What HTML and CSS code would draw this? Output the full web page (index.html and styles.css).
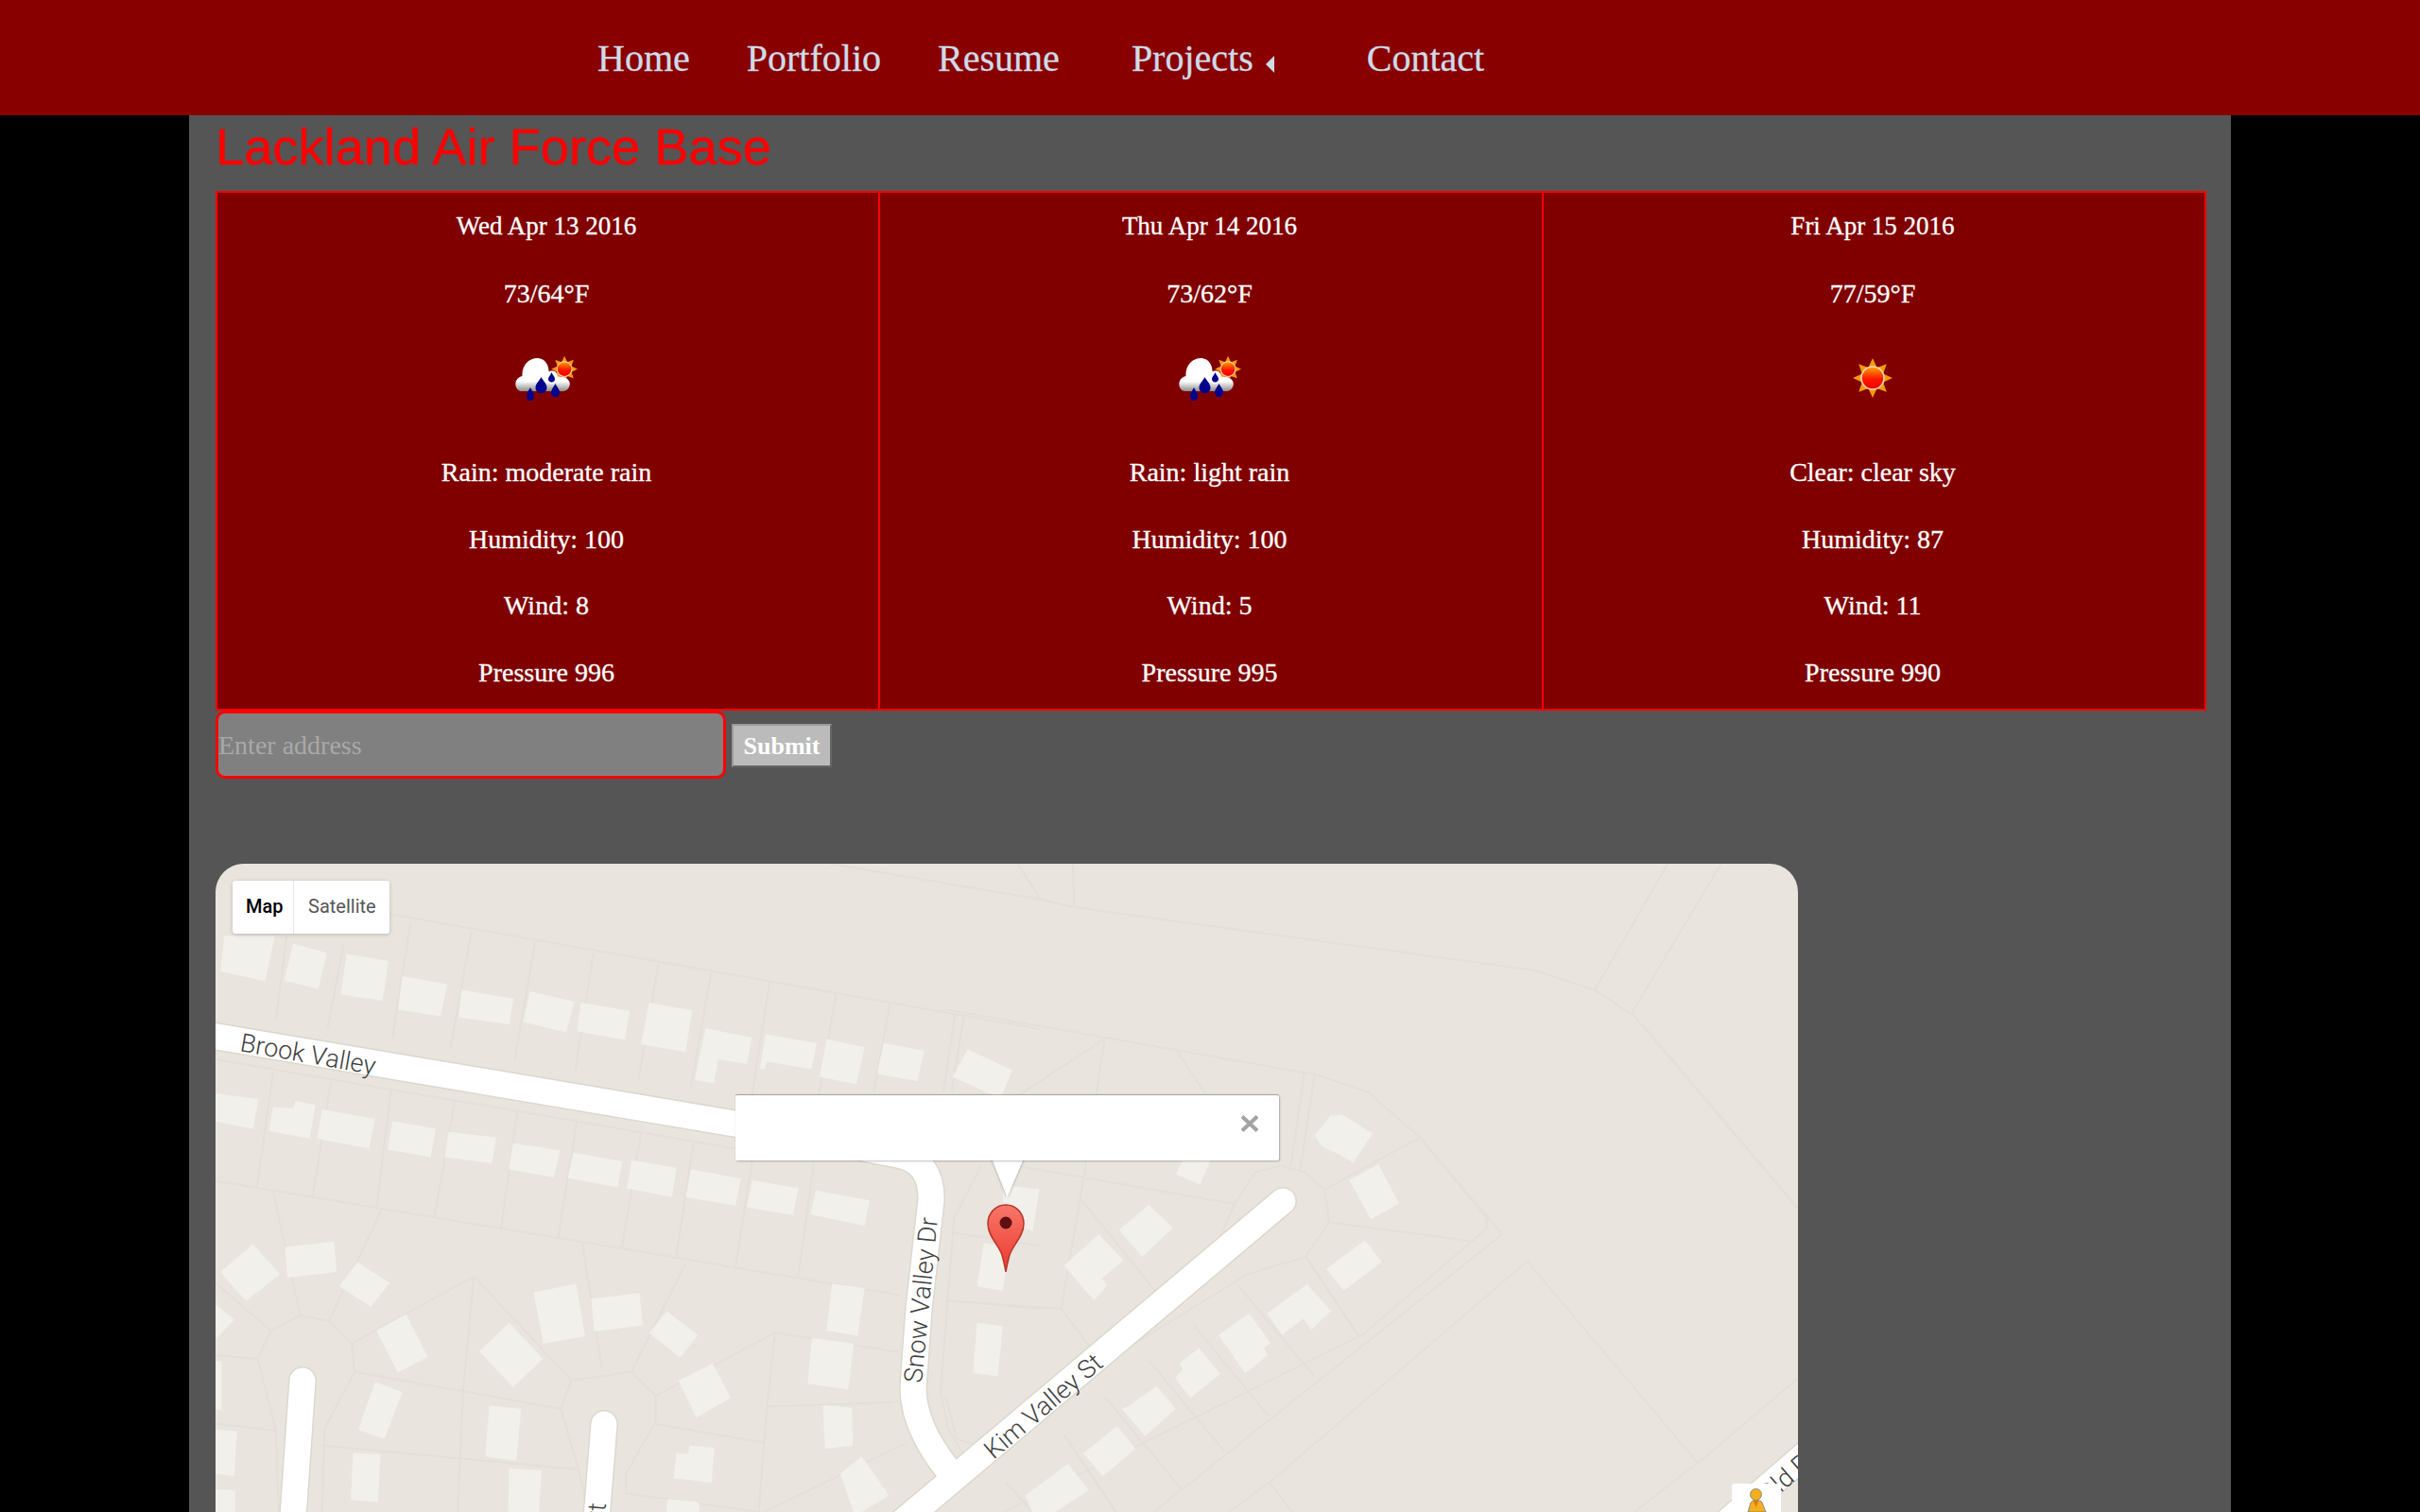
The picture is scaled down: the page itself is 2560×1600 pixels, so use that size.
FILE: index.html
```html
<!DOCTYPE html>
<html lang="en">
<head>
    <meta charset="UTF-8">
    <title>Lackland Air Force Base</title>
    <link rel="stylesheet" href="styles.css">
</head>
<body>
    <svg class="defs" width="0" height="0">
        <defs>
            <linearGradient id="sunFill" x1="0" y1="0" x2="0" y2="1">
                <stop offset="0" stop-color="#ffa600"/>
                <stop offset=".55" stop-color="#ff1500"/>
                <stop offset="1" stop-color="#f00000"/>
            </linearGradient>
            <linearGradient id="cloudFill" x1="0" y1="0" x2="0" y2="1">
                <stop offset="0" stop-color="#ffffff"/>
                <stop offset=".7" stop-color="#ffffff"/>
                <stop offset="1" stop-color="#8c8c8c"/>
            </linearGradient>
            <linearGradient id="pinFill" x1="0" y1="0" x2="0" y2="1">
                <stop offset="0" stop-color="#f8776a"/>
                <stop offset="1" stop-color="#ea3a2d"/>
            </linearGradient>
            <g id="sunShape">
                <polygon fill="#f79a0b" points="56,35 46.1,39.6 49.8,49.8 39.6,46.1 35,56 30.4,46.1 20.2,49.8 23.9,39.6 14,35 23.9,30.4 20.2,20.2 30.4,23.9 35,14 39.6,23.9 49.8,20.2 46.1,30.4"/>
                <circle cx="35" cy="35" r="12" fill="url(#sunFill)" stroke="#ffd9b0" stroke-width="1.6"/>
            </g>
            <symbol id="rainIcon" viewBox="23.5 12 70 70">
                <g class="soft">
                    <use href="#sunShape" transform="translate(54.5 14.5) scale(.66)"/>
                    <g fill="url(#cloudFill)">
                        <path d="M33 61 C24 61 23 47 33 45 C32 32 42 25 50 26 C58 27 61 34 61 40 C68 37 71 43 70 46 C78 44 85 50 83 55 C82 59 79 61 75 61 Z"/>
                    </g>
                    <circle cx="64" cy="47" r="6" fill="#fff"/>
                    <g fill="#03038f">
                        <path d="M53 46 C55 50 59 53 59 57 C59 61 56 63 53 63 C50 63 47 61 47 57 C47 53 51 50 53 46 Z"/>
                        <path d="M41.500 57 C43 60 45.500 63 45.500 66 C45.500 69 43.500 71 41.500 71 C39.500 71 37.500 69 37.500 66 C37.500 63 40 60 41.500 57 Z"/>
                        <path d="M68 53 C69.500 56 72.500 59 72.500 62 C72.500 65 70.500 67 68 67 C65.500 67 63.500 65 63.500 62 C63.500 59 66.500 56 68 53 Z"/>
                        <path d="M64 41 C65 44 67.500 45.500 67.500 48 C67.500 50 66 51.500 64 51.500 C62 51.500 60.500 50 60.500 48 C60.500 45.500 63 44 64 41 Z"/>
                    </g>
                </g>
            </symbol>
            <symbol id="clearIcon" viewBox="0 0 70 70">
                <use class="soft" href="#sunShape"/>
            </symbol>
        </defs>
    </svg>

    <header class="topbar">
        <nav class="menu">
            <a href="#">Home</a>
            <a href="#">Portfolio</a>
            <a href="#">Resume</a>
            <a href="#" class="projects">Projects <span class="caret"></span></a>
            <a href="#">Contact</a>
        </nav>
    </header>

    <main class="page">
        <h1 class="city">Lackland Air Force Base</h1>

        <section class="forecast">
            <div class="day">
                <p class="date">Wed Apr 13 2016</p>
                <p>73/64°F</p>
                <svg class="icon"><use href="#rainIcon"/></svg>
                <p>Rain: moderate rain</p>
                <p>Humidity: 100</p>
                <p>Wind: 8</p>
                <p>Pressure 996</p>
            </div>
            <div class="day">
                <p class="date">Thu Apr 14 2016</p>
                <p>73/62°F</p>
                <svg class="icon"><use href="#rainIcon"/></svg>
                <p>Rain: light rain</p>
                <p>Humidity: 100</p>
                <p>Wind: 5</p>
                <p>Pressure 995</p>
            </div>
            <div class="day">
                <p class="date">Fri Apr 15 2016</p>
                <p>77/59°F</p>
                <svg class="icon"><use href="#clearIcon"/></svg>
                <p>Clear: clear sky</p>
                <p>Humidity: 87</p>
                <p>Wind: 11</p>
                <p>Pressure 990</p>
            </div>
        </section>

        <form class="search">
            <input class="address" type="text" placeholder="Enter address">
            <button class="submit" type="button">Submit</button>
        </form>

        <div class="map">
            <svg class="tiles" width="1674" height="686" viewBox="228 914 1674 686">
                <rect x="228" y="914" width="1674" height="686" fill="#e9e5de"/>

                <!-- lot lines, coordinates taken from the crops -->
                <g transform="translate(200 880) scale(.574 .4592)" class="lot">
                    <polyline points="370,190 1568,455"/>
                    <polyline points="1180,74 1568,155"/>
                    <polyline points="180,240 160,435"/>
                    <polyline points="285,260 255,455"/>
                    <polyline points="408,210 375,475"/>
                    <polyline points="520,230 482,500"/>
                    <polyline points="638,255 600,525"/>
                    <polyline points="745,280 712,550"/>
                    <polyline points="865,305 828,575"/>
                    <polyline points="962,325 925,590"/>
                    <polyline points="1070,347 1037,610"/>
                    <polyline points="1192,375 1160,610"/>
                    <polyline points="1292,395 1262,600"/>
                    <polyline points="1412,420 1390,600"/>
                    <polyline points="1428,425 1405,600"/>
                    <polyline points="49,525 1005,730"/>
                    <polyline points="155,555 125,820"/>
                    <polyline points="262,570 228,840"/>
                    <polyline points="372,595 345,870"/>
                    <polyline points="490,620 452,890"/>
                    <polyline points="605,645 575,915"/>
                    <polyline points="715,665 680,938"/>
                    <polyline points="833,695 797,962"/>
                    <polyline points="930,715 897,985"/>
                    <polyline points="1040,740 1007,1005"/>
                    <polyline points="1152,760 1122,1030"/>
                    <polyline points="49,805 1310,1068"/>
                    <polyline points="155,830 205,1115 150,1150 49,1040"/>
                    <polyline points="205,1115 258,1128 355,870"/>
                    <polyline points="258,1128 300,1180 305,1245 250,1375 245,1568"/>
                    <polyline points="150,1150 127,1215 160,1380 165,1568"/>
                    <polyline points="127,1215 49,1207"/>
                    <polyline points="49,1365 160,1380"/>
                    <polyline points="300,1180 525,1025 505,1290 495,1568"/>
                    <polyline points="525,1025 705,1265 815,1245 915,995"/>
                    <polyline points="725,950 760,1232"/>
                    <polyline points="815,1245 860,1300 860,1360 805,1480 805,1525"/>
                    <polyline points="860,1300 1080,1155 1310,1200"/>
                    <polyline points="1080,1155 1065,1325 1050,1568"/>
                    <polyline points="1065,1325 1300,1315"/>
                    <polyline points="305,1245 685,1330 705,1265"/>
                    <polyline points="685,1330 718,1470 735,1568"/>
                    <polyline points="245,1415 718,1470"/>
                    <polyline points="805,1525 1050,1568"/>
                    <polyline points="860,1365 1060,1408"/>
                    <polyline points="1320,1410 1060,1568"/>
                    <polyline points="1385,1290 1400,1380 1430,1440"/>
                    <polyline points="1410,890 1460,770"/>
                    <polyline points="1410,925 1568,955"/>
                    <polyline points="1395,1080 1568,1100"/>
                    <polyline points="1410,890 1385,1290"/>
                </g>
                <g transform="translate(1000 880) scale(.6124 .4592)" class="lot">
                    <polyline points="0,120 165,157 225,175 1020,320 1122,365 1190,425 1473,870"/>
                    <polyline points="1205,445 1473,868"/>
                    <polyline points="125,74 165,157"/>
                    <polyline points="220,74 223,175"/>
                    <polyline points="1248,74 1122,365"/>
                    <polyline points="1340,74 1185,420"/>
                    <polyline points="0,410 640,560 730,600 820,705 935,890 935,915 720,1160"/>
                    <polyline points="820,705 962,928 360,1568"/>
                    <polyline points="620,558 597,770"/>
                    <polyline points="638,560 613,780"/>
                    <polyline points="275,478 240,790 200,1100 0,1080"/>
                    <polyline points="275,478 130,605"/>
                    <polyline points="400,505 450,605"/>
                    <polyline points="80,760 500,858 535,785 580,770 620,785 655,825 663,900 622,980 522,1020 45,1410 20,1400 0,1300"/>
                    <polyline points="500,858 475,930"/>
                    <polyline points="820,705 655,825"/>
                    <polyline points="663,900 915,945"/>
                    <polyline points="623,980 715,1165"/>
                    <polyline points="505,1045 637,1255"/>
                    <polyline points="428,1135 557,1345"/>
                    <polyline points="352,1220 483,1430"/>
                    <polyline points="277,1305 408,1515"/>
                    <polyline points="205,1390 295,1568"/>
                    <polyline points="105,1500 150,1568"/>
                    <polyline points="233,845 362,1058"/>
                    <polyline points="200,1100 248,1185"/>
                    <polyline points="720,1160 100,1568"/>
                    <polyline points="1005,990 1300,1455 1473,1260"/>
                    <polyline points="1005,990 560,1500 490,1568"/>
                    <polyline points="560,1500 600,1568"/>
                    <polyline points="1300,1455 1190,1568"/>
                </g>

                <!-- buildings -->
                <g transform="translate(200 880) scale(.574 .4592)" class="house">
                    <polygon points="65,240 158,240 140,345 58,322"/>
                    <polygon points="192,258 254,280 238,363 175,343"/>
                    <polygon points="290,282 367,298 357,390 280,375"/>
                    <polygon points="393,333 476,352 463,426 385,410"/>
                    <polygon points="502,365 598,385 590,444 497,428"/>
                    <polygon points="628,368 710,392 695,463 616,438"/>
                    <polygon points="722,394 812,413 803,480 715,460"/>
                    <polygon points="848,394 927,412 915,508 833,490"/>
                    <polygon points="952,453 1037,475 1028,535 975,525 967,580 932,572"/>
                    <polygon points="1063,467 1157,488 1147,547 1065,530 1060,548 1052,546"/>
                    <polygon points="1175,478 1245,497 1230,582 1162,565"/>
                    <polygon points="1280,487 1355,505 1342,575 1268,558"/>
                    <polygon points="1435,502 1517,550 1495,615 1407,565"/>
                    <polygon points="49,603 128,617 118,685 49,668"/>
                    <polygon points="155,635 192,638 196,620 233,630 222,707 147,690"/>
                    <polygon points="245,640 342,662 332,730 236,708"/>
                    <polygon points="375,667 455,685 445,750 366,733"/>
                    <polygon points="478,692 566,705 558,764 471,750"/>
                    <polygon points="597,718 684,735 672,797 589,778"/>
                    <polygon points="708,740 798,760 790,820 698,798"/>
                    <polygon points="816,757 898,775 890,842 807,822"/>
                    <polygon points="925,778 1017,800 1007,862 915,842"/>
                    <polygon points="1038,803 1123,822 1113,884 1028,865"/>
                    <polygon points="1155,827 1254,850 1245,908 1145,882"/>
                    <polygon points="118,950 167,1020 105,1082 58,1015"/>
                    <polygon points="177,957 267,945 272,1015 181,1028"/>
                    <polygon points="310,992 370,1040 335,1095 277,1048"/>
                    <polygon points="400,1112 440,1210 385,1246 345,1150"/>
                    <polygon points="49,1090 83,1125 49,1170"/>
                    <polygon points="635,1062 713,1042 730,1163 653,1180"/>
                    <polygon points="741,1077 830,1063 836,1138 747,1152"/>
                    <polygon points="880,1105 938,1160 905,1212 848,1155"/>
                    <polygon points="590,1132 652,1215 597,1280 535,1198"/>
                    <polygon points="965,1226 998,1305 935,1350 902,1265"/>
                    <polygon points="1148,1167 1225,1180 1215,1286 1140,1272"/>
                    <polygon points="1185,1042 1245,1052 1232,1162 1175,1150"/>
                    <polygon points="1168,1322 1222,1328 1223,1415 1172,1422"/>
                    <polygon points="343,1268 393,1292 360,1400 312,1378"/>
                    <polygon points="553,1323 612,1330 603,1450 546,1440"/>
                    <polygon points="49,1220 60,1220 60,1332 49,1332"/>
                    <polygon points="49,1378 88,1382 83,1486 49,1480"/>
                    <polygon points="302,1432 353,1435 348,1545 298,1540"/>
                    <polygon points="922,1415 968,1420 963,1500 893,1490 898,1433 920,1435"/>
                    <polygon points="1240,1440 1290,1530 1240,1568 1225,1568 1200,1480"/>
                    <polygon points="590,1468 650,1472 645,1568 588,1568"/>
                    <polygon points="882,1538 940,1545 940,1568 880,1568"/>
                    <polygon points="49,1515 85,1518 85,1568 49,1568"/>
                    <polygon points="1465,948 1510,958 1500,1058 1452,1048"/>
                    <polygon points="1452,1132 1500,1140 1490,1255 1445,1248"/>
                    <polygon points="1500,815 1567,825 1555,920 1500,900"/>
                </g>
                <g transform="translate(1000 880) scale(.6124 .4592)" class="house">
                    <polygon points="665,655 685,652 738,695 705,763 682,745 650,725 638,700"/>
                    <polygon points="748,767 784,857 735,893 698,803"/>
                    <polygon points="352,860 393,913 340,980 300,918"/>
                    <polygon points="265,928 308,988 270,1030 280,1045 257,1080 205,1000"/>
                    <polygon points="725,942 754,992 688,1058 658,1008"/>
                    <polygon points="625,1043 666,1105 632,1148 618,1122 582,1160 556,1110"/>
                    <polygon points="525,1110 562,1178 550,1190 557,1207 518,1248 472,1160"/>
                    <polygon points="438,1190 475,1250 423,1305 397,1258 410,1240 405,1225"/>
                    <polygon points="365,1278 398,1330 345,1393 305,1330 315,1325"/>
                    <polygon points="297,1370 328,1422 272,1485 238,1433"/>
                    <polygon points="212,1457 248,1518 190,1568 150,1568 138,1530"/>
                    <polygon points="410,758 458,758 440,813 398,790"/>
                </g>

                <!-- roads -->
                <path class="road-edge" d="M200 1092 L777 1189 L950 1222 Q986 1229 985 1270 L972 1385 L966 1468 Q966 1510 1004 1557"/>
                <path class="road-edge" d="M1357 1271 L955 1610"/>
                <path class="road-edge" d="M320 1461 L309 1620"/>
                <path class="road-edge" d="M639 1507 L630 1620"/>
                <path class="road-edge" d="M1925 1526 L1810 1625"/>
                <path class="road" d="M200 1092 L777 1189 L950 1222 Q986 1229 985 1270 L972 1385 L966 1468 Q966 1510 1004 1557"/>
                <path class="road" d="M1357 1271 L955 1610"/>
                <path class="road" d="M320 1461 L309 1620"/>
                <path class="road" d="M639 1507 L630 1620"/>
                <path class="road" d="M1925 1526 L1810 1625"/>

                <text class="label" transform="translate(253 1112) rotate(10)">Brook Valley</text>
                <text class="label" transform="translate(975 1464) rotate(-84.500)">Snow Valley Dr</text>
                <text class="label" transform="translate(1051 1545) rotate(-40.500)">Kim Valley St</text>
                <text class="label" transform="translate(641 1591) rotate(-85)" text-anchor="end">St</text>
                <text class="label" transform="translate(1870 1592) rotate(-41)">Old Rd</text>

                <!-- marker -->
                <path d="M1064 1275 C1075 1275 1083 1284 1083 1295 C1083 1308 1071 1318 1068 1328 C1066 1335 1065 1340 1064 1346 C1063 1340 1062 1335 1060 1328 C1057 1318 1045 1308 1045 1295 C1045 1284 1053 1275 1064 1275 Z" fill="url(#pinFill)" stroke="#b8362b" stroke-width="1.500"/>
                <circle cx="1064" cy="1294" r="6.500" fill="#5e1010"/>

                <!-- info window tail -->
                <polygon points="1049,1226 1083,1226 1065.500,1267" fill="#fff" class="tail"/>
            </svg>

            <div class="map-type">
                <span class="type-btn type-active">Map</span>
                <span class="type-btn">Satellite</span>
            </div>

            <div class="info-window">
                <svg class="info-close" width="20" height="18" viewBox="0 0 20 18">
                    <path d="M2 1.500 L18 16.500 M18 1.500 L2 16.500" stroke="#a3a3a3" stroke-width="4"/>
                </svg>
            </div>

            <div class="pegman">
                <svg width="52" height="30" viewBox="0 0 52 30">
                    <path d="M17 30 L20 20 Q21 17.500 25.500 17.500 Q31 17.500 32 20 L36 30 Z" fill="#f5ae1c" stroke="#8b8b8b" stroke-width="1"/>
                    <circle cx="25.500" cy="11.500" r="6" fill="#f5ae1c" stroke="#8b8b8b" stroke-width="1"/>
                    <path d="M22.500 18 L28.500 18 L25.500 25 Z" fill="#dd7b12"/>
                </svg>
            </div>
        </div>
    </main>
</body>
</html>
```

FILE: styles.css
```css
html, body{
    margin: 0;
    padding: 0;
    height: 100%;
    overflow: hidden;
}
body{
    background-color: black;
    font-family: "Liberation Serif", Georgia, serif;
}
.defs{
    position: absolute;
}
.soft{
    filter: blur(.4px);
}

.topbar{
    height: 122px;
    background-color: #880000;
    display: flex;
    align-items: center;
}
.menu{
    display: flex;
    align-items: center;
    margin-left: 632px;
}
.menu a{
    color: #cfdbe8;
    font-size: 40px;
    text-decoration: none;
    margin-right: 60px;
    -webkit-text-stroke: .3px #cfdbe8;
}
.menu .projects{
    margin-left: 16px;
    margin-right: 98px;
}
.caret{
    display: inline-block;
    width: 0;
    height: 0;
    margin-left: 3px;
    border-top: 9px solid transparent;
    border-bottom: 9px solid transparent;
    border-right: 9px solid #cfdbe8;
    vertical-align: -2px;
}

.page{
    width: 2160px;
    height: 1478px;
    margin: 0 0 0 200px;
    padding: 0 26px 0 28px;
    box-sizing: border-box;
    background-color: #555555;
    overflow: hidden;
}
.city{
    margin: 0;
    height: 80px;
    line-height: 66px;
    font-family: "Liberation Sans", Arial, sans-serif;
    font-size: 54.25px;
    font-weight: normal;
    color: red;
    -webkit-text-stroke: .4px red;
}

.forecast{
    display: grid;
    grid-template-columns: 699px 702px 1fr;
    height: 550px;
    box-sizing: border-box;
    border: 2px solid red;
    background-color: #800000;
    color: white;
    text-align: center;
}
.day{
    height: 546px;
    box-sizing: border-box;
    padding: 20px 3px 0 0;
    border-left: 2px solid red;
    overflow: hidden;
}
.day:first-child{
    border-left: 0;
}
.day p{
    margin: 0 0 39.5px;
    font-size: 28px;
    line-height: 31px;
    -webkit-text-stroke: .3px white;
}
.day .date{
    font-size: 27px;
}
.icon{
    display: block;
    width: 70px;
    height: 70px;
    margin: 15px auto 49px;
}

.search{
    display: flex;
    align-items: center;
    height: 72px;
}
.address{
    width: 540px;
    height: 72px;
    box-sizing: border-box;
    padding: 2px 0 0;
    border: 3px solid red;
    border-radius: 10px;
    background-color: #808080;
    color: white;
    font-family: inherit;
    font-size: 28px;
    outline: none;
}
.address::placeholder{
    color: #a9a9a9;
    opacity: 1;
}
.submit{
    width: 106px;
    height: 46px;
    margin: 1px 0 0 6px;
    padding: 2px 0 0;
    border: 2px solid;
    border-color: #9a9a9a #666 #666 #9a9a9a;
    background-color: #bbbbbb;
    color: white;
    font-family: inherit;
    font-size: 26px;
    font-weight: bold;
}

.map{
    position: relative;
    width: 1674px;
    height: 686px;
    margin-top: 90px;
    border-radius: 30px 30px 0 0;
    overflow: hidden;
}
.tiles{
    display: block;
}
.lot polyline{
    fill: none;
    stroke: #e3e0d9;
    stroke-width: 2px;
    vector-effect: non-scaling-stroke;
}
.house polygon{
    fill: #f2f0ea;
}
.road, .road-edge{
    fill: none;
    stroke-linecap: round;
    stroke-linejoin: round;
}
.road{
    stroke: white;
    stroke-width: 27px;
}
.road-edge{
    stroke: #dcd8ce;
    stroke-width: 30px;
}
.label{
    font-family: Roboto, sans-serif;
    font-size: 27px;
    font-weight: 300;
    fill: #3f3f3f;
}
.tail{
    filter: drop-shadow(0 0 1.5px rgba(0, 0, 0, .35));
}

.map-type{
    position: absolute;
    top: 18px;
    left: 18px;
    display: flex;
    height: 56px;
    border-radius: 3px;
    background-color: white;
    box-shadow: 0 1px 4px rgba(0, 0, 0, .2);
    font-family: Roboto, sans-serif;
    font-size: 20px;
    line-height: 55px;
}
.type-btn{
    padding: 0 14px 0 15px;
    color: #565656;
}
.type-active{
    width: 37px;
    padding: 0 13px 0 14px;
    border-right: 1px solid #e6e6e6;
    color: black;
    font-weight: 500;
}

.info-window{
    position: absolute;
    top: 245px;
    left: 550px;
    width: 575px;
    height: 69px;
    border-radius: 2px;
    background-color: white;
    box-shadow: 0 -1px 1px rgba(0, 0, 0, .3), 1px 1px 2px rgba(0, 0, 0, .25);
}
.info-close{
    position: absolute;
    top: 21px;
    right: 21px;
}

.pegman{
    position: absolute;
    left: 1604px;
    top: 656px;
    width: 52px;
    height: 30px;
    border-radius: 3px 3px 0 0;
    background-color: white;
}
.pegman svg{
    display: block;
}
```
